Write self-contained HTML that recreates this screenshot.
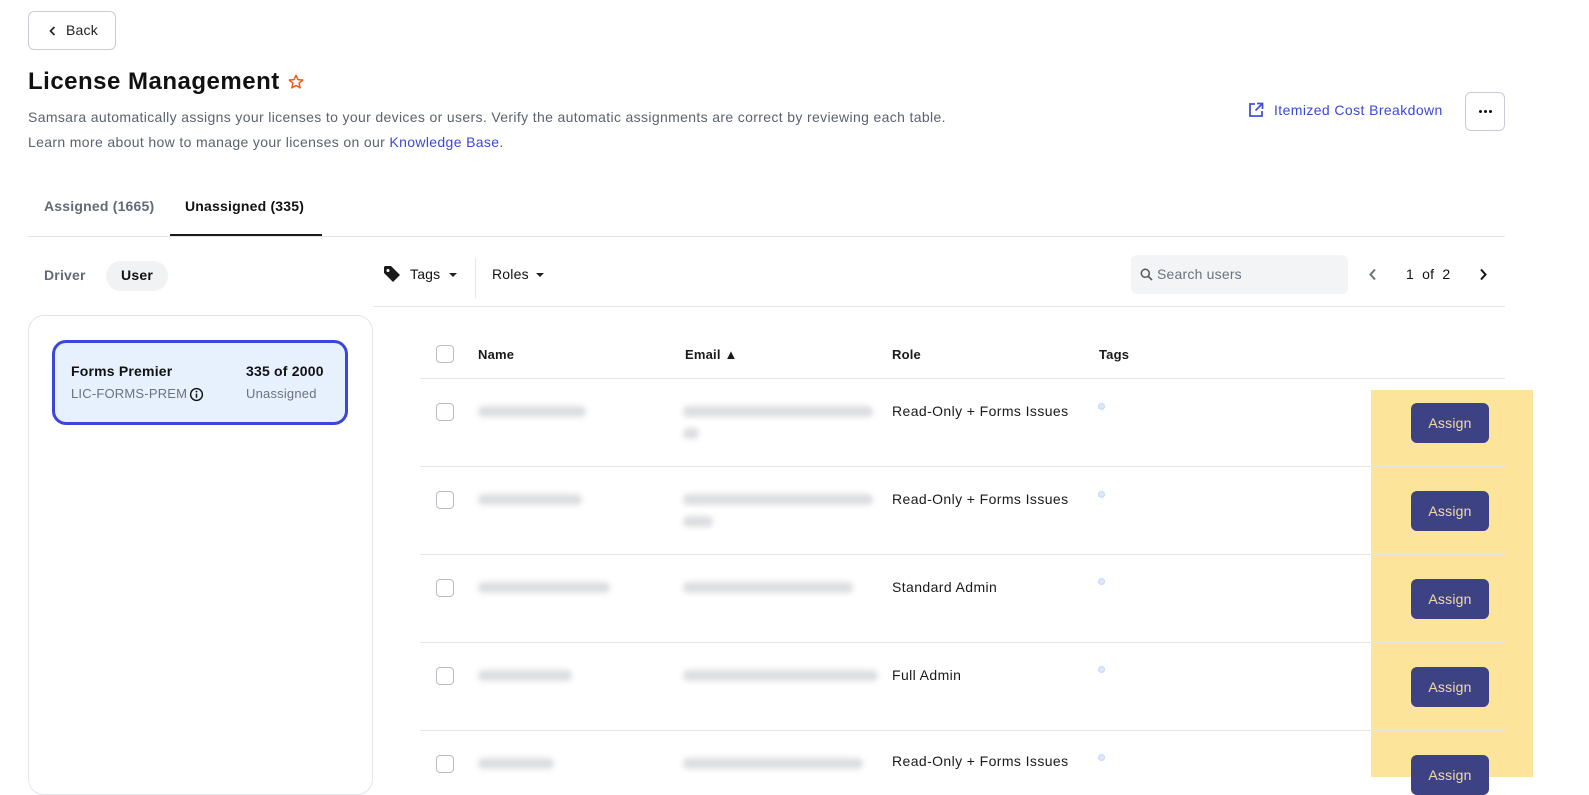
<!DOCTYPE html>
<html><head><meta charset="utf-8"><style>
*{box-sizing:border-box;margin:0;padding:0}
body{width:1589px;height:777px;overflow:hidden;background:#fff;font-family:"Liberation Sans",sans-serif;color:#111;position:relative;letter-spacing:0.2px}
.a{position:absolute;white-space:nowrap}
.btn{border:1px solid #c9ccd4;border-radius:6px;background:#fff}
.sub{font-size:14px;color:#5b6270;letter-spacing:0.35px}
.hl{height:1px;background:#e4e5e8}
.cb{width:18px;height:18px;border:1px solid #b8bcc4;border-radius:4px;background:#fff}
.th{font-size:13px;font-weight:bold;color:#1a1a1a}
.blur{background:#dcdde0;height:11px;border-radius:5px;filter:blur(3px)}
.role{font-size:14px;color:#1a1a1a;letter-spacing:0.4px}
.dot{width:7px;height:7px;border-radius:50%;background:#dce8fb;border:1px solid #c5d7f5}
.asg{width:78px;height:40px;border-radius:6px;background:#3d4285;color:#f3dca0;font-size:14px;text-align:center;line-height:40px}
</style></head><body>
<div class="a btn" style="left:28px;top:11px;width:88px;height:39px"></div>
<svg class="a" style="left:48px;top:25px" width="10" height="12" viewBox="0 0 10 12"><path d="M6.5 2 L2.5 6 L6.5 10" stroke="#222" stroke-width="1.6" fill="none"/></svg>
<div class="a" style="left:66px;top:22px;font-size:14px;color:#222">Back</div>
<div class="a" style="left:28px;top:68px;font-size:24px;font-weight:bold;color:#111;letter-spacing:0.5px">License Management</div>
<svg class="a" style="left:287px;top:73px" width="18" height="18" viewBox="0 0 24 24"><path d="M12 3l2.6 5.8 6.3.6-4.8 4.2 1.4 6.2L12 16.6 6.5 19.8l1.4-6.2L3.1 9.4l6.3-.6z" fill="none" stroke="#f05a18" stroke-width="2" stroke-linejoin="round"/></svg>
<div class="a sub" style="left:28px;top:109px">Samsara automatically assigns your licenses to your devices or users. Verify the automatic assignments are correct by reviewing each table.</div>
<div class="a sub" style="left:28px;top:134px">Learn more about how to manage your licenses on our <span style="color:#3a48d8">Knowledge Base</span>.</div>
<svg class="a" style="left:1248px;top:102px" width="16" height="16" viewBox="0 0 16 16"><path d="M7 2H2v12h12V9" fill="none" stroke="#4650e0" stroke-width="1.8"/><path d="M9 1.5h5.5V7M14.5 1.5L7.5 8.5" fill="none" stroke="#4650e0" stroke-width="1.8"/></svg>
<div class="a" style="left:1274px;top:102px;font-size:14px;color:#3a48d8;letter-spacing:0.4px">Itemized Cost Breakdown</div>
<div class="a btn" style="left:1465px;top:92px;width:40px;height:39px"></div>
<div class="a" style="left:1479px;top:110px;width:3px;height:3px;border-radius:50%;background:#111"></div>
<div class="a" style="left:1484px;top:110px;width:3px;height:3px;border-radius:50%;background:#111"></div>
<div class="a" style="left:1489px;top:110px;width:3px;height:3px;border-radius:50%;background:#111"></div>
<div class="a" style="left:44px;top:198px;font-size:14px;font-weight:bold;color:#626a78">Assigned (1665)</div>
<div class="a" style="left:185px;top:198px;font-size:14px;font-weight:bold;color:#111">Unassigned (335)</div>
<div class="a hl" style="left:28px;top:236px;width:1477px"></div>
<div class="a" style="left:170px;top:234px;width:152px;height:2px;background:#1a1a1a"></div>
<div class="a" style="left:44px;top:267px;font-size:14px;font-weight:bold;color:#626a78">Driver</div>
<div class="a" style="left:106px;top:261px;width:62px;height:30px;border-radius:15px;background:#f1f2f4;text-align:center;line-height:29px;font-size:14px;font-weight:bold">User</div>
<svg class="a" style="left:383px;top:265px" width="18" height="18" viewBox="0 0 18 18"><path d="M1 2v6l9 9 7-7-9-9H2z" fill="#1a1a1a"/><circle cx="5" cy="5.5" r="1.5" fill="#fff"/></svg>
<div class="a" style="left:410px;top:266px;font-size:14px">Tags</div>
<svg class="a" style="left:448px;top:272px" width="10" height="6"><path d="M1 1h8L5 5z" fill="#222"/></svg>
<div class="a" style="left:475px;top:258px;width:1px;height:40px;background:#e4e5e8"></div>
<div class="a" style="left:492px;top:266px;font-size:14px">Roles</div>
<svg class="a" style="left:535px;top:272px" width="10" height="6"><path d="M1 1h8L5 5z" fill="#222"/></svg>
<div class="a" style="left:1131px;top:255px;width:217px;height:39px;border-radius:6px;background:#f3f4f6"></div>
<svg class="a" style="left:1140px;top:268px" width="13" height="13" viewBox="0 0 13 13"><circle cx="5.3" cy="5.3" r="4" fill="none" stroke="#555" stroke-width="1.5"/><path d="M8.3 8.3L12 12" stroke="#555" stroke-width="1.6"/></svg>
<div class="a" style="left:1157px;top:266px;font-size:14px;color:#6b7280">Search users</div>
<svg class="a" style="left:1368px;top:268px" width="10" height="13"><path d="M7 1.5L2.5 6.5L7 11.5" stroke="#6b7280" stroke-width="2" fill="none"/></svg>
<div class="a" style="left:1406px;top:266px;font-size:14px">1&nbsp; of&nbsp; 2</div>
<svg class="a" style="left:1478px;top:268px" width="10" height="13"><path d="M3 1.5L7.5 6.5L3 11.5" stroke="#111" stroke-width="2" fill="none"/></svg>
<div class="a hl" style="left:373px;top:306px;width:1132px"></div>
<div class="a" style="left:28px;top:315px;width:345px;height:480px;border:1px solid #e4e5e8;border-radius:16px"></div>
<div class="a" style="left:52px;top:340px;width:296px;height:85px;border:3px solid #3a48d8;border-radius:14px;background:#e7f0fd"></div>
<div class="a" style="left:71px;top:363px;font-size:14px;font-weight:bold">Forms Premier</div>
<div class="a" style="left:246px;top:363px;font-size:14px;font-weight:bold">335 of 2000</div>
<div class="a" style="left:71px;top:386px;font-size:13px;color:#6b7280">LIC-FORMS-PREM</div>
<svg class="a" style="left:189px;top:387px" width="15" height="15" viewBox="0 0 16 16"><circle cx="8" cy="8" r="6.3" fill="none" stroke="#111" stroke-width="1.5"/><path d="M8 7v4.5" stroke="#111" stroke-width="1.6"/><circle cx="8" cy="4.8" r="1" fill="#111"/></svg>
<div class="a" style="left:246px;top:386px;font-size:13px;color:#6b7280">Unassigned</div>
<div class="a cb" style="left:436px;top:345px"></div>
<div class="a th" style="left:478px;top:347px">Name</div>
<div class="a th" style="left:685px;top:347px">Email ▲</div>
<div class="a th" style="left:892px;top:347px">Role</div>
<div class="a th" style="left:1099px;top:347px">Tags</div>
<div class="a hl" style="left:420px;top:378px;width:1085px"></div>
<div class="a" style="left:1371px;top:390px;width:162px;height:387px;background:#fde49b"></div>

<div class="a cb" style="left:436px;top:403px"></div>
<div class="a blur" style="left:478px;top:406px;width:108px"></div>
<div class="a blur" style="left:683px;top:406px;width:190px"></div>
<div class="a blur" style="left:683px;top:428px;width:16px"></div>
<div class="a role" style="left:892px;top:403px">Read-Only + Forms Issues</div>
<div class="a dot" style="left:1098px;top:403px"></div>
<div class="a asg" style="left:1411px;top:403px">Assign</div>
<div class="a hl" style="left:420px;top:466px;width:1085px"></div>

<div class="a cb" style="left:436px;top:491px"></div>
<div class="a blur" style="left:478px;top:494px;width:104px"></div>
<div class="a blur" style="left:683px;top:494px;width:190px"></div>
<div class="a blur" style="left:683px;top:516px;width:30px"></div>
<div class="a role" style="left:892px;top:491px">Read-Only + Forms Issues</div>
<div class="a dot" style="left:1098px;top:491px"></div>
<div class="a asg" style="left:1411px;top:491px">Assign</div>
<div class="a hl" style="left:420px;top:554px;width:1085px"></div>

<div class="a cb" style="left:436px;top:579px"></div>
<div class="a blur" style="left:478px;top:582px;width:132px"></div>
<div class="a blur" style="left:683px;top:582px;width:170px"></div>
<div class="a role" style="left:892px;top:579px">Standard Admin</div>
<div class="a dot" style="left:1098px;top:578px"></div>
<div class="a asg" style="left:1411px;top:579px">Assign</div>
<div class="a hl" style="left:420px;top:642px;width:1085px"></div>

<div class="a cb" style="left:436px;top:667px"></div>
<div class="a blur" style="left:478px;top:670px;width:94px"></div>
<div class="a blur" style="left:683px;top:670px;width:195px"></div>
<div class="a role" style="left:892px;top:667px">Full Admin</div>
<div class="a dot" style="left:1098px;top:666px"></div>
<div class="a asg" style="left:1411px;top:667px">Assign</div>
<div class="a hl" style="left:420px;top:730px;width:1085px"></div>

<div class="a cb" style="left:436px;top:755px"></div>
<div class="a blur" style="left:478px;top:758px;width:76px"></div>
<div class="a blur" style="left:683px;top:758px;width:180px"></div>
<div class="a role" style="left:892px;top:753px">Read-Only + Forms Issues</div>
<div class="a dot" style="left:1098px;top:754px"></div>
<div class="a asg" style="left:1411px;top:755px">Assign</div>
</body></html>
